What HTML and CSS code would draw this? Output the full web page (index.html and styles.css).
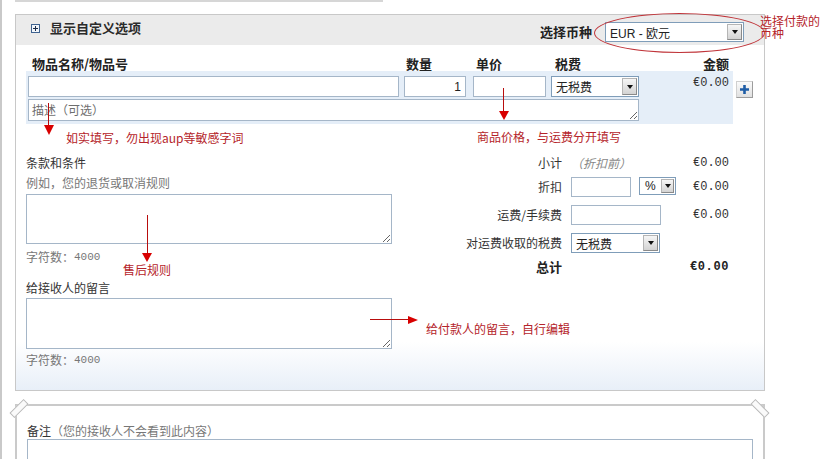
FILE: index.html
```html
<!DOCTYPE html>
<html lang="zh-CN">
<head>
<meta charset="utf-8">
<title>创建账单</title>
<link rel="stylesheet" href="styles.css">
</head>
<body>
<div class="page">
  <div class="top-stub"></div>

  <section class="panel">
    <header class="panel-head">
      <div class="toggle">
        <svg class="toggle-icon" width="9" height="9" viewBox="0 0 9 9"><rect x="0.5" y="0.5" width="8" height="8" fill="#f2f6fb" stroke="#3f6390"/><path d="M2 4.5h5M4.5 2v5" stroke="#1b2d4a" stroke-width="1"/></svg>
        <span class="toggle-text">显示自定义选项</span>
      </div>
      <div class="currency">
        <span class="currency-label">选择币种</span>
        <div class="select select-currency"><span class="select-text">EUR - 欧元</span><span class="select-btn"></span></div>
      </div>
    </header>

    <div class="items">
      <div class="items-head">
        <span class="h-name">物品名称/物品号</span>
        <span class="h-qty">数量</span>
        <span class="h-price">单价</span>
        <span class="h-tax">税费</span>
        <span class="h-amount">金额</span>
      </div>
      <div class="item-line">
        <div class="item-band">
          <input class="field f-name" type="text">
          <input class="field f-qty" type="text" value="1">
          <input class="field f-price" type="text">
          <div class="select f-tax"><span>无税费</span><span class="select-btn"></span></div>
          <span class="amount">€0.00</span>
          <textarea class="field f-desc" placeholder="描述（可选）"></textarea>
        </div>
        <button class="add-btn" type="button"><svg width="9" height="9" viewBox="0 0 9 9"><path d="M4.5 0v9M0 4.5h9" stroke="#1f5da6" stroke-width="2.6"/></svg></button>
      </div>
    </div>

    <div class="lower">
      <div class="notes">
        <div class="notes-label">条款和条件</div>
        <div class="hint">例如，您的退货或取消规则</div>
        <textarea class="field notes-area"></textarea>
        <div class="count"><span>字符数：</span><span class="num">4000</span></div>
        <div class="notes-label second">给接收人的留言</div>
        <textarea class="field notes-area second"></textarea>
        <div class="count second"><span>字符数：</span><span class="num">4000</span></div>
      </div>

      <div class="summary">
        <div class="srow s-sub">
          <span class="slabel">小计</span>
          <span class="sfield pre">（折扣前）</span>
          <span class="sval">€0.00</span>
        </div>
        <div class="srow s-disc">
          <span class="slabel">折扣</span>
          <span class="sfield disc-field">
            <input class="field disc-input" type="text">
            <span class="select select-pct"><span>%</span><span class="select-btn"></span></span>
          </span>
          <span class="sval">€0.00</span>
        </div>
        <div class="srow s-ship">
          <span class="slabel">运费/手续费</span>
          <span class="sfield"><input class="field ship-input" type="text"></span>
          <span class="sval">€0.00</span>
        </div>
        <div class="srow s-tax">
          <span class="slabel">对运费收取的税费</span>
          <span class="sfield"><span class="select select-shiptax"><span>无税费</span><span class="select-btn"></span></span></span>
          <span class="sval"></span>
        </div>
        <div class="srow s-total">
          <span class="slabel total-label">总计</span>
          <span class="sfield"></span>
          <span class="sval total-val">€0.00</span>
        </div>
      </div>
    </div>
  </section>

  <section class="memo">
    <span class="tape tape-l"></span>
    <span class="tape tape-r"></span>
    <div class="memo-label">备注<span class="muted">（您的接收人不会看到此内容）</span></div>
    <textarea class="field memo-area"></textarea>
  </section>

  <!-- annotations drawn over the form -->
  <div class="ellipse"></div>
  <div class="note-text t5">选择付款的<br>币种</div>

  <div class="arrow-v a1"><span class="shaft"></span><span class="head"></span></div>
  <div class="note-text t1">如实填写，勿出现aup等敏感字词</div>

  <div class="arrow-v a2"><span class="shaft"></span><span class="head"></span></div>
  <div class="note-text t2">商品价格，与运费分开填写</div>

  <div class="arrow-v a3"><span class="shaft"></span><span class="head"></span></div>
  <div class="note-text t3">售后规则</div>

  <div class="arrow-h a4"><span class="shaft"></span><span class="head"></span></div>
  <div class="note-text t4">给付款人的留言，自行编辑</div>
</div>
</body>
</html>
```

FILE: styles.css
```css
html, body {
  margin: 0;
  padding: 0;
  overflow: hidden;
  background: #fff;
}

body {
  font-family: "Noto Sans CJK SC", "Liberation Sans", sans-serif;
  font-size: 12px;
  color: #333;
}

.page {
  position: relative;
  width: 827px;
  height: 459px;
  overflow: hidden;
  box-shadow: inset 2px 0 0 #c9c9c9;
}

.top-stub {
  width: 368px;
  height: 2px;
  margin-left: 15px;
  background: #d6d6d6;
}

/* ---------- main panel ---------- */
.panel {
  box-sizing: border-box;
  width: 750px;
  margin: 12px 0 0 15px;
  border: 1px solid #c8c8c8;
  background: linear-gradient(180deg, #fff 0, #fff calc(100% - 48px), #e8eff8 100%);
}

.panel-head {
  display: flex;
  align-items: flex-start;
  height: 30px;
  padding: 0 20px 0 15px;
  background: #ebebeb;
}

.toggle {
  display: flex;
  align-items: center;
  margin-top: 5px;
}

.toggle-icon {
  display: block;
  margin-right: 10px;
}

.toggle-text {
  font-size: 13px;
  font-weight: 700;
  line-height: 16px;
  color: #2b2b2b;
}

.currency {
  display: flex;
  align-items: center;
  gap: 13px;
  margin-left: auto;
  margin-top: 7px;
}

.currency-label {
  font-size: 13px;
  font-weight: 700;
  line-height: 16px;
  color: #222;
}

/* ---------- fake select ---------- */
.select {
  display: flex;
  align-items: center;
  box-sizing: border-box;
  border: 1px solid #7f9db9;
  background: #fff;
  padding-left: 4px;
  font-size: 12px;
  color: #222;
}

.select-text {
  font-family: "Liberation Sans", "Noto Sans CJK SC", sans-serif;
}

.select-btn {
  display: flex;
  align-items: center;
  justify-content: center;
  box-sizing: border-box;
  width: 15px;
  height: calc(100% - 2px);
  margin-left: auto;
  margin-right: 1px;
  border: 1px solid #8a8a8a;
  border-top-color: #b5b5b5;
  border-left-color: #b5b5b5;
  background: linear-gradient(#f6f6f6, #d3d3d3);
}

.select-btn::after {
  content: "";
  width: 0;
  height: 0;
  border-left: 3.5px solid transparent;
  border-right: 3.5px solid transparent;
  border-top: 4px solid #111;
}

.select-currency {
  width: 139px;
  height: 20px;
}

/* ---------- inputs ---------- */
.field {
  box-sizing: border-box;
  margin: 0;
  padding: 0 3px;
  border: 1px solid #a5b6c8;
  border-radius: 0;
  background: #fff;
  font-family: "Noto Sans CJK SC", "Liberation Sans", sans-serif;
  font-size: 12px;
  color: #222;
  outline: none;
}

.field::placeholder {
  color: #6e6e6e;
}

textarea.field {
  display: block;
  padding: 2px 3px;
  line-height: 16px;
  overflow: hidden;
}

/* ---------- item lines ---------- */
.items {
  margin: 11px 0 0 10px;
}

.items-head,
.item-band {
  display: grid;
  grid-template-columns: 371px 62px 75px 88px 1fr;
  column-gap: 5px;
  box-sizing: border-box;
  width: 707px;
}

.items-head {
  height: 15px;
  padding: 0 4px 0 2px;
  font-size: 13px;
  font-weight: 700;
  line-height: 15px;
  color: #222;
}

.h-name { padding-left: 4px; }
.h-qty { padding-left: 2px; }
.h-price { padding-left: 5px; }
.h-tax { padding-left: 4px; }
.h-amount { text-align: right; }

.item-line {
  display: flex;
  align-items: flex-start;
}

.item-band {
  grid-template-rows: 21px 22px;
  row-gap: 2px;
  padding: 5px 4px 3px 2px;
  background: #e5eef8;
}

.f-name { grid-column: 1; grid-row: 1; height: 21px; }
.f-qty { grid-column: 2; grid-row: 1; height: 21px; text-align: right; padding-right: 4px; font-family: "Liberation Sans", sans-serif; }
.f-price { grid-column: 3; grid-row: 1; height: 21px; width: 73px; margin-left: 2px; }
.f-tax { grid-column: 4; grid-row: 1; height: 21px; }

.amount {
  grid-column: 5;
  grid-row: 1;
  align-self: start;
  text-align: right;
  font-family: "Liberation Mono", monospace;
  font-size: 12px;
  line-height: 14px;
  color: #333;
}

.f-desc {
  grid-column: 1 / 5;
  grid-row: 2;
  width: 100%;
  height: 22px;
}

.add-btn {
  display: flex;
  align-items: center;
  justify-content: center;
  box-sizing: border-box;
  width: 17px;
  height: 17px;
  margin: 10px 0 0 3px;
  padding: 0;
  border: 1px solid #d0d0d0;
  border-right-color: #9c9c9c;
  border-bottom-color: #9c9c9c;
  background: linear-gradient(#fbfbfb, #e0e0e0);
}

.add-btn svg { display: block; }

/* ---------- lower area ---------- */
.lower {
  display: flex;
  align-items: flex-start;
  margin-top: 31px;
  padding: 0 35px 22px 10px;
}

.notes {
  flex: none;
  width: 366px;
}

.notes-label {
  line-height: 16px;
  color: #333;
}

.notes-label.second { margin-top: 15px; }

.hint {
  margin-top: 4px;
  line-height: 16px;
  color: #777;
}

.notes-area {
  width: 366px;
  height: 50px;
  margin-top: 3px;
}

.notes-area.second {
  height: 51px;
  margin-top: 2px;
}

.count {
  display: flex;
  align-items: center;
  height: 16px;
  margin-top: 5px;
  line-height: 16px;
  color: #777;
}

.count.second { margin-top: 3px; }

.num {
  font-family: "Liberation Mono", monospace;
  font-size: 11px;
  line-height: 16px;
}

/* ---------- summary ---------- */
.summary {
  flex: 1;
}

.srow {
  display: grid;
  grid-template-columns: 1fr 106px 52px;
  align-items: center;
}

.slabel {
  padding-right: 9px;
  text-align: right;
  line-height: 16px;
  color: #333;
}

.sfield {
  display: flex;
  align-items: flex-start;
}

.sval {
  text-align: right;
  font-family: "Liberation Mono", monospace;
  font-size: 12px;
  line-height: 16px;
  color: #333;
}

.s-sub { height: 16px; }
.s-disc { height: 20px; margin-top: 6px; }
.s-ship { height: 20px; margin-top: 8px; }
.s-tax { height: 20px; margin-top: 8px; }
.s-total { height: 16px; margin-top: 6px; }

.pre {
  font-style: italic;
  color: #888;
  line-height: 16px;
}

.disc-input { width: 60px; height: 20px; }

.select-pct {
  width: 37px;
  height: 18px;
  margin-left: 8px;
  padding-left: 5px;
  font-family: "Liberation Sans", sans-serif;
}

.select-pct .select-btn { width: 13px; }

.ship-input { width: 90px; height: 20px; }

.select-shiptax { width: 89px; height: 20px; }

.total-label {
  font-weight: 700;
  font-size: 13px;
  color: #222;
}

.total-val {
  font-weight: 700;
  letter-spacing: 0.6px;
  color: #222;
}

/* ---------- memo panel ---------- */
.memo {
  position: relative;
  box-sizing: border-box;
  width: 750px;
  margin: 13px 0 0 15px;
  padding: 17px 10px 0 10px;
  border: 2px solid #cacaca;
  border-bottom: none;
  background: #fff;
}

.memo-label {
  line-height: 16px;
  color: #333;
}

.muted { color: #777; }

.memo-area {
  width: 726px;
  height: 60px;
}

.tape {
  position: absolute;
  top: -1px;
  box-sizing: border-box;
  width: 20px;
  height: 7px;
  border: 1px solid #b9b9b9;
  background: #fafafa;
}

.tape-l {
  left: -8px;
  transform: rotate(-45deg);
}

.tape-r {
  left: 733px;
  transform: rotate(45deg);
}

/* ---------- annotations ---------- */
.note-text {
  position: absolute;
  color: #b5242a;
  font-size: 12px;
  line-height: 16px;
  white-space: nowrap;
}

.t1 { left: 66px; top: 130px; }
.t2 { left: 477px; top: 129px; }
.t3 { left: 123px; top: 262px; }
.t4 { left: 426px; top: 321px; }
.t5 { left: 760px; top: 15px; line-height: 12px; }

.ellipse {
  position: absolute;
  left: 594px;
  top: 13px;
  box-sizing: border-box;
  width: 171px;
  height: 40px;
  border: 1px solid #c0353a;
  border-radius: 50%;
}

.arrow-v,
.arrow-h {
  position: absolute;
  display: flex;
  align-items: center;
}

.arrow-v { flex-direction: column; }

.arrow-v .shaft {
  width: 1px;
  background: #b80d0d;
}

.arrow-v .head {
  width: 0;
  height: 0;
  border-left: 5px solid transparent;
  border-right: 5px solid transparent;
  border-top: 9px solid #d80000;
}

.arrow-h .shaft {
  height: 1px;
  width: 38px;
  background: #b80d0d;
}

.arrow-h .head {
  width: 0;
  height: 0;
  border-top: 4.5px solid transparent;
  border-bottom: 4.5px solid transparent;
  border-left: 10px solid #d80000;
}

.a1 { left: 43px; top: 103px; width: 11px; }
.a1 .shaft { height: 22px; }
.a1 .head { border-left-width: 5.5px; border-right-width: 5.5px; border-top-width: 10px; }

.a2 { left: 498px; top: 88px; width: 11px; }
.a2 .shaft { height: 23px; }
.a2 .head { border-left-width: 5.5px; border-right-width: 5.5px; }

.a3 { left: 142px; top: 215px; width: 10px; }
.a3 .shaft { height: 38px; }

.a4 { left: 370px; top: 315px; height: 9px; }
```
